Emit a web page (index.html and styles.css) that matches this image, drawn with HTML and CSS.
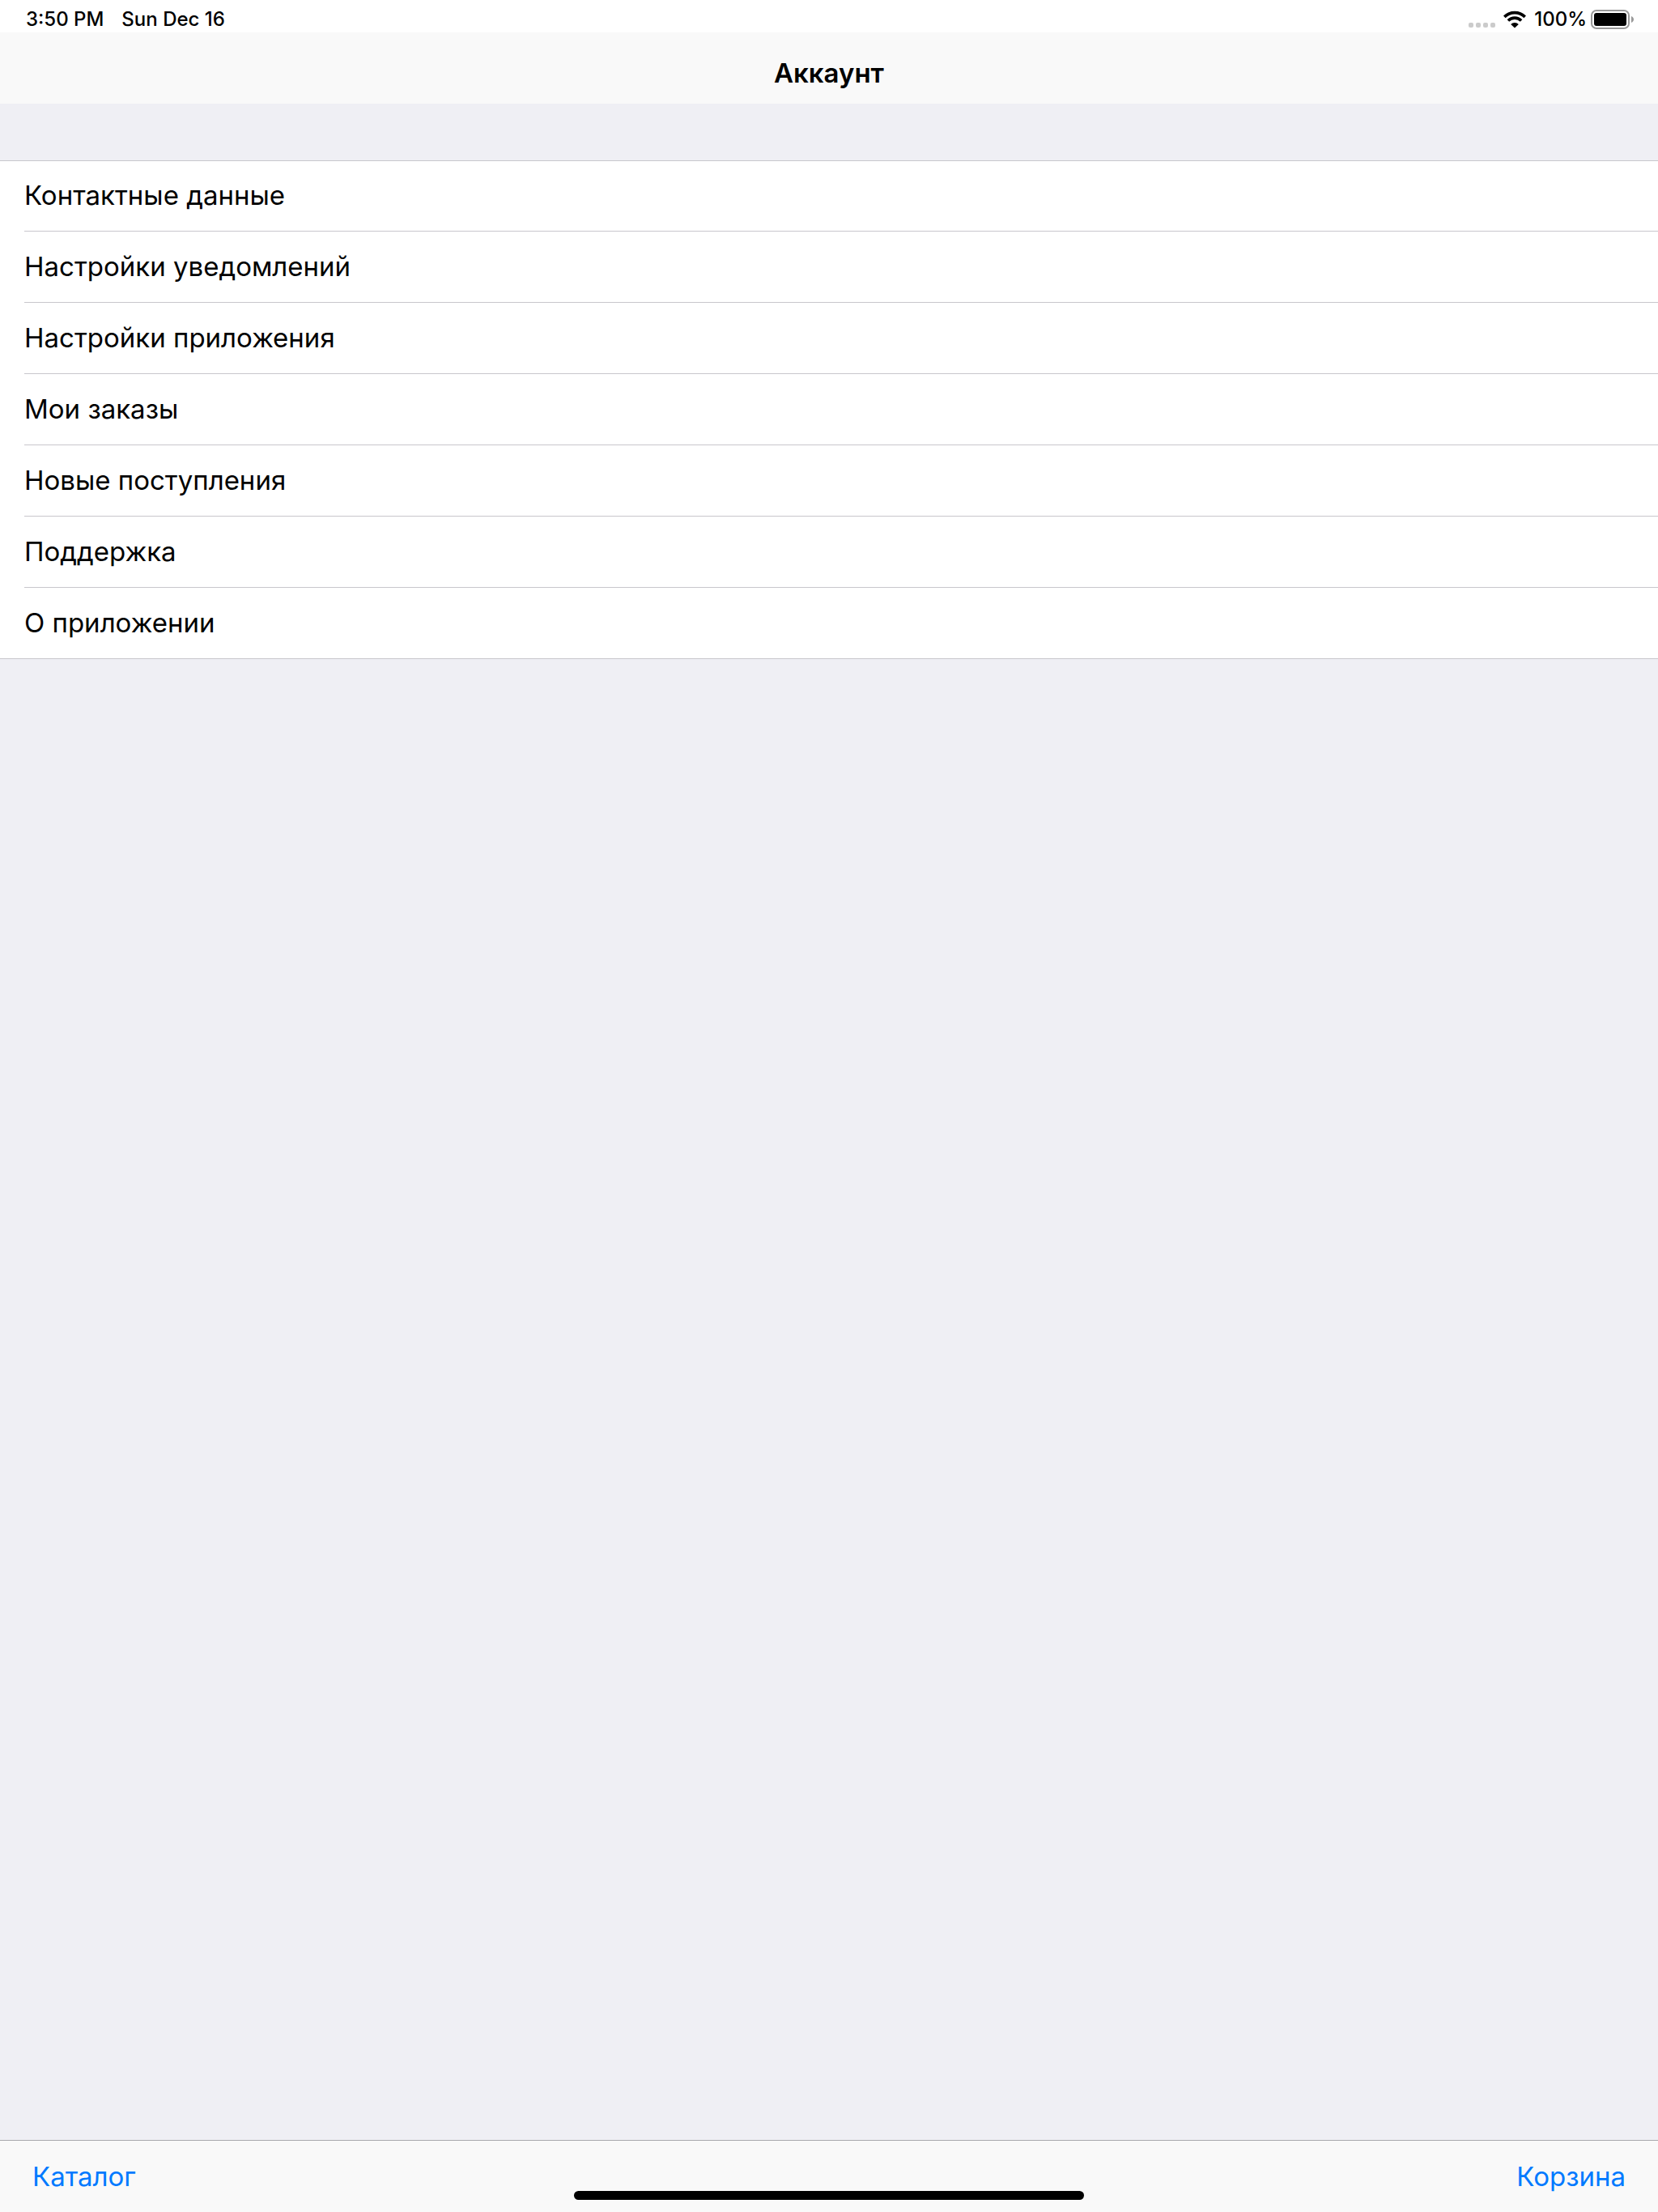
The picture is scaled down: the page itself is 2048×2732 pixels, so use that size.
FILE: index.html
```
<!DOCTYPE html>
<html lang="ru">
<head>
    <meta charset="UTF-8">
    <meta name="viewport" content="width=device-width, initial-scale=1.0">
    <title>Аккаунт</title>
    <link rel="stylesheet" href="styles.css">
</head>
<body>
    <div class="status-bar">
        <div class="status-left">
            <span>3:50 PM</span>
            <span>Sun Dec 16</span>
        </div>
        <div class="status-right">
            <svg class="signal" width="33" height="24" viewBox="0 0 33 24" fill="#cbcbcb">
                <rect x="0" y="16" width="6" height="6" rx="2"/>
                <rect x="9" y="16" width="6" height="6" rx="2"/>
                <rect x="18" y="16" width="6" height="6" rx="2"/>
                <rect x="27" y="16" width="6" height="6" rx="2"/>
            </svg>
            <svg class="wifi" width="28" height="24" viewBox="0 0 28 24">
                <g fill="none" stroke="#000" stroke-width="3.6">
                    <path d="M1.3 8.9A18 18 0 0 1 26.7 8.9"/>
                    <path d="M5.9 13.5A11.5 11.5 0 0 1 22.1 13.5"/>
                </g>
                <path d="M9.2 18.1a6.8 6.8 0 0 1 9.6 0L14 22.4z"/>
            </svg>
            <span class="percent">100%</span>
            <svg class="battery" width="53" height="24" viewBox="0 0 53 24">
                <rect x="1" y="1" width="46" height="22" rx="6" fill="none" stroke="#999" stroke-width="2"/>
                <rect x="4" y="4" width="40" height="16" rx="3"/>
                <path d="M50 8c4 1.500 4 6.500 0 8z" fill="#999"/>
            </svg>
        </div>
    </div>

    <header class="navbar">
        <h1>Аккаунт</h1>
    </header>

    <main class="content">
        <ul class="menu">
            <li><a href="#contacts">Контактные данные</a></li>
            <li><a href="#notifications">Настройки уведомлений</a></li>
            <li><a href="#settings">Настройки приложения</a></li>
            <li><a href="#orders">Мои заказы</a></li>
            <li><a href="#new">Новые поступления</a></li>
            <li><a href="#support">Поддержка</a></li>
            <li><a href="#about">О приложении</a></li>
        </ul>
    </main>

    <footer class="toolbar">
        <button type="button">Каталог</button>
        <button type="button">Корзина</button>
        <div class="home-indicator"></div>
    </footer>
</body>
</html>
```
FILE: styles.css
```
/* General Styling */
* {
    margin: 0;
    padding: 0;
    box-sizing: border-box;
}

body {
    font-family: Inter, "Noto Sans", sans-serif;
    font-size: 33px;
    line-height: 40px;
    color: #000;
    background: #efeff4;
    display: flex;
    flex-direction: column;
    min-height: 100vh;
}

/* Status bar */
.status-bar {
    display: flex;
    justify-content: space-between;
    height: 40px;
    padding: 12px 30px 0 32px;
    background: #fff;
    font-size: 24px;
    font-weight: 500;
    line-height: 24px;
}

.status-left {
    display: flex;
    gap: 22px;
}

.status-right {
    display: flex;
}

.wifi {
    margin-left: 10px;
}

.percent {
    margin: 0 5px 0 10px;
}

/* Navbar */
.navbar {
    display: flex;
    justify-content: center;
    align-items: center;
    height: 88px;
    padding-top: 12px;
    background: #f9f9f9;
}

.navbar h1 {
    font-size: 33px;
    font-weight: 600;
}

/* Menu list */
.content {
    flex-grow: 1;
    padding-top: 70px;
}

.menu {
    list-style: none;
    background: #fff;
    border-bottom: 1px solid #c8c7cc;
}

.menu li {
    margin-left: 30px;
    border-bottom: 1px solid #c8c7cc;
}

.menu li:first-child {
    margin-left: 0;
    padding-left: 30px;
    border-top: 1px solid #c8c7cc;
    border-bottom: none;
}

.menu li:last-child {
    border-bottom: none;
}

.menu a {
    display: flex;
    align-items: center;
    height: 87px;
    padding-bottom: 2px;
    color: #000;
    text-decoration: none;
}

.menu li:first-child a {
    border-bottom: 1px solid #c8c7cc;
}

/* Toolbar */
.toolbar {
    position: relative;
    display: flex;
    justify-content: space-between;
    align-items: center;
    height: 89px;
    padding: 0 40px;
    background: #f9f9f9;
    border-top: 1px solid #a9a9ad;
}

.toolbar button {
    border: none;
    background: none;
    color: #007aff;
    font: inherit;
    cursor: pointer;
}

.home-indicator {
    position: absolute;
    left: 50%;
    bottom: 15px;
    width: 630px;
    height: 11px;
    margin-left: -315px;
    border-radius: 6px;
    background: #000;
}
```
